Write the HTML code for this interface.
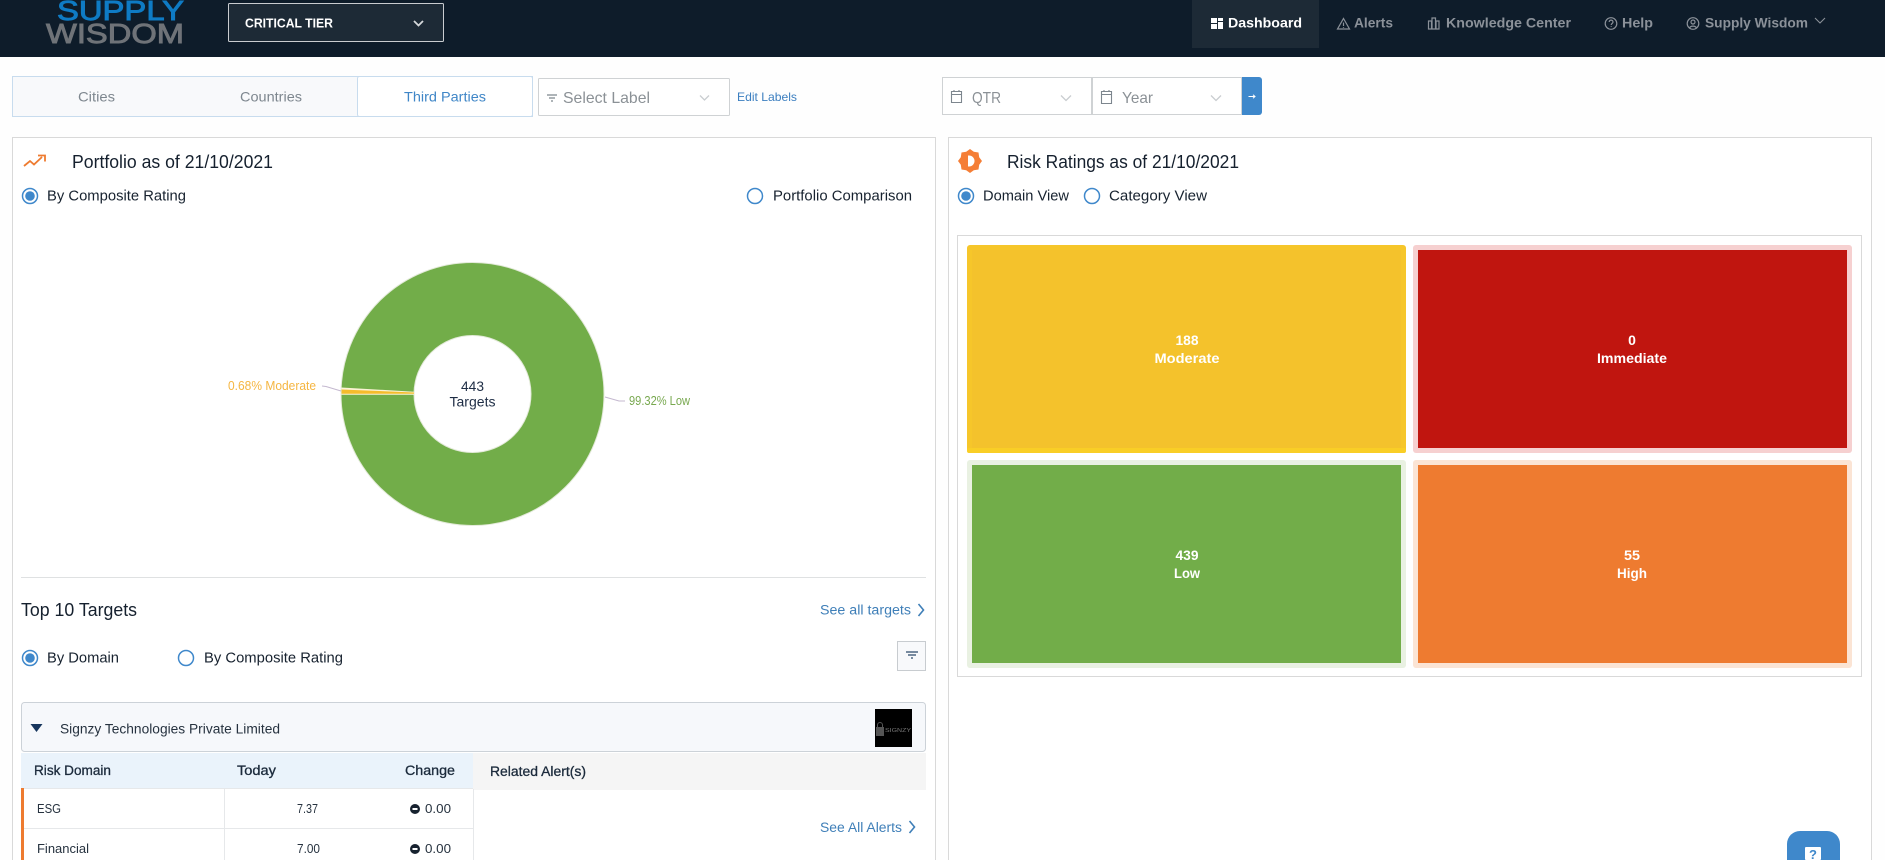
<!DOCTYPE html>
<html lang="en">
<head>
<meta charset="utf-8">
<title>Supply Wisdom Dashboard</title>
<style>
html,body{margin:0;padding:0;width:1885px;height:860px;overflow:hidden;background:#fefefe}
svg{display:block;position:absolute;left:0;top:0}
text{font-family:"Liberation Sans",sans-serif;font-size:15px;fill:#17222f}
.c{text-anchor:middle}
.nav{font-weight:bold;font-size:13.5px;fill:#8b9199}
.gr{fill:#7d868e;font-size:14px}
.tb{font-size:13px;fill:#26323f}
.th{font-size:13.5px;fill:#1c2b3c;stroke:#1c2b3c;stroke-width:.3}
.wh{fill:#fff;font-size:14px;font-weight:bold}
.lk{fill:#3f7fb8;font-size:13.5px}
.ic{fill:none;stroke:#8b9199;stroke-width:1.2}
</style>
</head>
<body>
<svg width="1885" height="860" viewBox="0 0 1885 860" xmlns="http://www.w3.org/2000/svg">
<!-- header -->
<rect x="0" y="0" width="1885" height="57" fill="#0e1c2a"/>
<text x="57" y="20" textLength="127" lengthAdjust="spacingAndGlyphs" style="font-size:28px;fill:#0f7bc4;stroke:#0f7bc4;stroke-width:.9">SUPPLY</text>
<text x="46" y="43" textLength="138" lengthAdjust="spacingAndGlyphs" style="font-size:28px;fill:#6f7378;stroke:#6f7378;stroke-width:.9">WISDOM</text>
<rect x="228.500" y="3.500" width="215" height="38" rx="1" fill="#1d2a36" stroke="#c9ccd0"/>
<text x="245" y="27.500" textLength="88" lengthAdjust="spacingAndGlyphs" style="font-size:13px;font-weight:bold;fill:#fff">CRITICAL TIER</text>
<path d="M414 21l4.500 4.500 4.500-4.500" fill="none" stroke="#d5d8db" stroke-width="1.800"/>
<rect x="1192" y="0" width="127" height="48" fill="#1d2a36"/>
<path d="M1211 18h6v5h-6zM1218 18h5v3h-5zM1218 22h5v7h-5zM1211 24h6v5h-6z" fill="#fff"/>
<text x="1228" y="27.500" textLength="74" lengthAdjust="spacingAndGlyphs" class="nav" style="fill:#fff">Dashboard</text>
<path class="ic" d="M1343.500 18.500l6 10.500h-12zM1343.500 22.500v3.500M1343.500 27v.8"/>
<text x="1354" y="27.500" textLength="39" lengthAdjust="spacingAndGlyphs" class="nav">Alerts</text>
<path class="ic" d="M1428.500 29v-8h3v8zM1432 29v-11h3.500v11zM1436 29v-8h3v8z"/>
<text x="1446" y="27.500" textLength="125" lengthAdjust="spacingAndGlyphs" class="nav">Knowledge Center</text>
<circle class="ic" cx="1611" cy="23.500" r="5.800"/>
<path class="ic" d="M1609.200 22c0-2.500 3.800-2.500 3.800 0 0 1.500-1.800 1.500-1.800 3M1611.200 26.200v.8"/>
<text x="1622" y="27.500" textLength="31" lengthAdjust="spacingAndGlyphs" class="nav">Help</text>
<circle class="ic" cx="1693" cy="23.500" r="5.800"/>
<circle class="ic" cx="1693" cy="22" r="2"/>
<path class="ic" d="M1689.500 28c1-2.500 6-2.500 7 0"/>
<text x="1705" y="27.500" textLength="103" lengthAdjust="spacingAndGlyphs" class="nav">Supply Wisdom</text>
<path d="M1815 18l5 5 5-5" fill="none" stroke="#8b9199" stroke-width="1.100"/>

<!-- tabs -->
<rect x="12.500" y="76.500" width="520" height="40" fill="#f8f9fb" stroke="#c8dcee"/>
<rect x="357.500" y="76.500" width="175" height="40" rx="2" fill="#fff" stroke="#c8dcee"/>
<text x="78" y="101.500" textLength="37" lengthAdjust="spacingAndGlyphs" class="gr">Cities</text>
<text x="240" y="101.500" textLength="62" lengthAdjust="spacingAndGlyphs" class="gr">Countries</text>
<text x="404" y="101.500" textLength="82" lengthAdjust="spacingAndGlyphs" class="gr" style="fill:#3f86c7">Third Parties</text>

<!-- select label -->
<rect x="538.500" y="78.500" width="191" height="37" rx="1" fill="#fff" stroke="#cfd2d4"/>
<path d="M547 95h10M549 98h6M551 101h2" stroke="#7d868e" stroke-width="1.200"/>
<text x="563" y="103" textLength="87" lengthAdjust="spacingAndGlyphs" style="font-size:16px;fill:#8b9196">Select Label</text>
<path d="M700 95.500l4.500 4.500 4.500-4.500" fill="none" stroke="#c9cdd0" stroke-width="1.300"/>
<text x="737" y="101" textLength="60" lengthAdjust="spacingAndGlyphs" style="font-size:12px;fill:#3c7fc0">Edit Labels</text>

<!-- date filter -->
<rect x="942.500" y="77.500" width="149" height="37" fill="#fff" stroke="#cfd2d4"/>
<rect x="1092.500" y="77.500" width="149" height="37" fill="#fff" stroke="#cfd2d4"/>
<path d="M951.500 91.500h10v11h-10zM951.500 94.500h10M954 90v2M959 90v2" fill="none" stroke="#7d868e" stroke-width="1.100"/>
<text x="972" y="103" textLength="29" lengthAdjust="spacingAndGlyphs" style="font-size:16px;fill:#8b9196">QTR</text>
<path d="M1061 95.500l5 5 5-5" fill="none" stroke="#c9cdd0" stroke-width="1.300"/>
<path d="M1101.500 91.500h10v12h-10zM1101.500 94.500h10M1104 90v2M1109 90v2" fill="none" stroke="#7d868e" stroke-width="1.100"/>
<text x="1122" y="103" textLength="31" lengthAdjust="spacingAndGlyphs" style="font-size:16px;fill:#8b9196">Year</text>
<path d="M1211 95.500l5 5 5-5" fill="none" stroke="#c9cdd0" stroke-width="1.300"/>
<path d="M1242 77h17a3 3 0 0 1 3 3v32a3 3 0 0 1-3 3h-17z" fill="#3f88cb"/>
<path d="M1248.500 96.500h6M1253 94.800l2 1.700-2 1.700" fill="none" stroke="#fff" stroke-width="1"/>

<!-- panels -->
<path d="M12.500 860V137.500H935.500V860" fill="#fff" stroke="#d9d9d9"/>
<path d="M948.500 860V137.500H1871.500V860" fill="#fff" stroke="#d9d9d9"/>

<!-- portfolio -->
<path d="M24 166l6-5 4 3.500 8-7.500M38 155.500h7v6" fill="none" stroke="#ee7b30" stroke-width="1.800"/>
<text x="72" y="168" textLength="201" lengthAdjust="spacingAndGlyphs" style="font-size:18px;fill:#15202e">Portfolio as of 21/10/2021</text>
<circle cx="30" cy="196" r="7.500" fill="#fff" stroke="#3f88cb" stroke-width="1.500"/><circle cx="30" cy="196" r="4.800" fill="#3f88cb"/>
<text x="47" y="200.500" textLength="139" lengthAdjust="spacingAndGlyphs">By Composite Rating</text>
<circle cx="755" cy="196" r="7.500" fill="#fff" stroke="#3f88cb" stroke-width="1.500"/>
<text x="773" y="200.500" textLength="139" lengthAdjust="spacingAndGlyphs">Portfolio Comparison</text>

<!-- donut -->
<circle cx="472.500" cy="394" r="95" fill="none" stroke="#e3ead9" stroke-width="74"/>
<circle cx="472.500" cy="394" r="95" fill="none" stroke="#72ad49" stroke-width="72"/>
<path d="M341.500 387.500L414 391.700V394.800H341.500z" fill="#fbf3d5"/>
<path d="M341.500 389.500L414 392.500V393.800H341.500z" fill="#f5bc2c"/>
<text x="472.500" y="391" class="c" textLength="23" lengthAdjust="spacingAndGlyphs" style="font-size:14px;fill:#1d2c44">443</text>
<text x="472.500" y="406.500" class="c" textLength="46" lengthAdjust="spacingAndGlyphs" style="font-size:14px;fill:#1d2c44">Targets</text>
<path d="M322 386l4 .5 15 4.500" fill="none" stroke="#c4b8cf"/>
<path d="M605 397l14 4h6" fill="none" stroke="#c4b8cf"/>
<text x="228" y="390" textLength="88" lengthAdjust="spacingAndGlyphs" style="font-size:12.500px;fill:#f5b642">0.68% Moderate</text>
<text x="629" y="405" textLength="61" lengthAdjust="spacingAndGlyphs" style="font-size:12.500px;fill:#78a84f">99.32% Low</text>

<!-- top 10 -->
<rect x="21" y="577" width="905" height="1" fill="#dfe1e2"/>
<text x="21" y="616" textLength="116" lengthAdjust="spacingAndGlyphs" style="font-size:18.500px;fill:#15202e">Top 10 Targets</text>
<text x="820" y="614.500" textLength="91" lengthAdjust="spacingAndGlyphs" class="lk">See all targets</text>
<path d="M918.500 604l5 6-5 6" fill="none" stroke="#3f7fb8" stroke-width="1.600"/>
<circle cx="30" cy="658" r="7.500" fill="#fff" stroke="#3f88cb" stroke-width="1.500"/><circle cx="30" cy="658" r="4.800" fill="#3f88cb"/>
<text x="47" y="662.500" textLength="72" lengthAdjust="spacingAndGlyphs">By Domain</text>
<circle cx="186" cy="658" r="7.500" fill="#fff" stroke="#3f88cb" stroke-width="1.500"/>
<text x="204" y="662.500" textLength="139" lengthAdjust="spacingAndGlyphs">By Composite Rating</text>
<rect x="897.500" y="641.500" width="28" height="29" fill="#f8f9fb" stroke="#c8ccd0"/>
<path d="M906 652h12M908 655h8M911 658h2" stroke="#2c4a6a" stroke-width="1.300"/>

<!-- accordion -->
<rect x="21.500" y="702.500" width="904" height="49" rx="3" fill="#f6f8fb" stroke="#ccd2d8"/>
<path d="M30.500 724h12l-6 8z" fill="#17365d"/>
<text x="60" y="733.500" textLength="220" lengthAdjust="spacingAndGlyphs" class="tb" style="font-size:13.500px">Signzy Technologies Private Limited</text>
<rect x="875" y="709" width="37" height="38" fill="#000"/>
<rect x="876" y="727" width="8" height="9" fill="#555"/>
<path d="M877.500 727v-2a2.500 2.500 0 0 1 5 0v2" fill="none" stroke="#555"/>
<text x="885" y="732" textLength="26" lengthAdjust="spacingAndGlyphs" style="font-size:5.500px;fill:#777">SIGNZY</text>

<!-- table -->
<rect x="21" y="753" width="452" height="36" fill="#eaf3fb"/>
<rect x="473" y="753" width="453" height="37" fill="#f5f5f5"/>
<text x="34" y="775" textLength="77" lengthAdjust="spacingAndGlyphs" class="th">Risk Domain</text>
<text x="237" y="775" textLength="39" lengthAdjust="spacingAndGlyphs" class="th">Today</text>
<text x="405" y="775" textLength="50" lengthAdjust="spacingAndGlyphs" class="th">Change</text>
<text x="490" y="776" textLength="96" lengthAdjust="spacingAndGlyphs" class="th">Related Alert(s)</text>
<rect x="21" y="788" width="3" height="72" fill="#ee7b30"/>
<rect x="24" y="788" width="449" height="1" fill="#e6e8ea"/>
<rect x="24" y="828" width="449" height="1" fill="#e6e8ea"/>
<rect x="224" y="789" width="1" height="71" fill="#e6e8ea"/>
<rect x="473" y="789" width="1" height="71" fill="#e6e8ea"/>
<text x="37" y="813" textLength="24" lengthAdjust="spacingAndGlyphs" class="tb">ESG</text>
<text x="297" y="813" textLength="21" lengthAdjust="spacingAndGlyphs" class="tb">7.37</text>
<circle cx="415" cy="809" r="5" fill="#17222f"/><rect x="412.500" y="808" width="5" height="2" fill="#fff"/>
<text x="425" y="813" textLength="26" lengthAdjust="spacingAndGlyphs" class="tb">0.00</text>
<text x="37" y="853" textLength="52" lengthAdjust="spacingAndGlyphs" class="tb">Financial</text>
<text x="297" y="853" textLength="23" lengthAdjust="spacingAndGlyphs" class="tb">7.00</text>
<circle cx="415" cy="849" r="5" fill="#17222f"/><rect x="412.500" y="848" width="5" height="2" fill="#fff"/>
<text x="425" y="853" textLength="26" lengthAdjust="spacingAndGlyphs" class="tb">0.00</text>
<text x="820" y="832" textLength="82" lengthAdjust="spacingAndGlyphs" class="lk">See All Alerts</text>
<path d="M909.500 821l5 6-5 6" fill="none" stroke="#3f7fb8" stroke-width="1.600"/>

<!-- risk ratings -->
<path d="M970 149L973.800 151.800 978.500 152.500 979.200 157.200 982 161 979.200 164.800 978.500 169.500 973.800 170.200 970 173 966.200 170.200 961.500 169.500 960.800 164.800 958 161 960.800 157.200 961.500 152.500 966.200 151.800z" fill="#f57e36"/>
<path d="M968 155.500h1a5.500 5.500 0 0 1 0 11h-1z" fill="#fff"/>
<text x="1007" y="168" textLength="232" lengthAdjust="spacingAndGlyphs" style="font-size:18px;fill:#15202e">Risk Ratings as of 21/10/2021</text>
<circle cx="966" cy="196" r="7.500" fill="#fff" stroke="#3f88cb" stroke-width="1.500"/><circle cx="966" cy="196" r="4.800" fill="#3f88cb"/>
<text x="983" y="200.500" textLength="86" lengthAdjust="spacingAndGlyphs">Domain View</text>
<circle cx="1092" cy="196" r="7.500" fill="#fff" stroke="#3f88cb" stroke-width="1.500"/>
<text x="1109" y="200.500" textLength="98" lengthAdjust="spacingAndGlyphs">Category View</text>

<!-- treemap -->
<rect x="957.500" y="235.500" width="904" height="441" fill="#fff" stroke="#d9d9d9"/>
<rect x="967" y="245" width="439" height="208" rx="3" fill="#f6c62a"/>
<rect x="972" y="250" width="429" height="198" fill="#f4c22c"/>
<rect x="967" y="448" width="439" height="5" rx="2" fill="#f9ce26"/>
<rect x="1413" y="245" width="439" height="208" rx="3" fill="#f6d0d0"/>
<rect x="1418" y="250" width="429" height="198" fill="#c0150f"/>
<rect x="967" y="460" width="439" height="208" rx="3" fill="#e9f1e2"/>
<rect x="972" y="465" width="429" height="198" fill="#72ad49"/>
<rect x="1413" y="460" width="439" height="208" rx="3" fill="#fbe4d4"/>
<rect x="1418" y="465" width="429" height="198" fill="#ee7b30"/>
<text x="1187" y="345" class="c wh" textLength="23" lengthAdjust="spacingAndGlyphs">188</text>
<text x="1187" y="363" class="c wh" textLength="65" lengthAdjust="spacingAndGlyphs">Moderate</text>
<text x="1632" y="345" class="c wh">0</text>
<text x="1632" y="363" class="c wh" textLength="70" lengthAdjust="spacingAndGlyphs">Immediate</text>
<text x="1187" y="560" class="c wh" textLength="23" lengthAdjust="spacingAndGlyphs">439</text>
<text x="1187" y="578" class="c wh" textLength="26" lengthAdjust="spacingAndGlyphs">Low</text>
<text x="1632" y="560" class="c wh" textLength="16" lengthAdjust="spacingAndGlyphs">55</text>
<text x="1632" y="578" class="c wh" textLength="30" lengthAdjust="spacingAndGlyphs">High</text>

<!-- help button -->
<path d="M1787 860v-16a13 13 0 0 1 13-13h27a13 13 0 0 1 13 13v16z" fill="#3f88cb"/>
<rect x="1805" y="847" width="16" height="13" rx="1" fill="#fff"/>
<text x="1813" y="859" class="c" style="font-size:13px;font-weight:bold;fill:#3f88cb">?</text>
</svg>
</body>
</html>
